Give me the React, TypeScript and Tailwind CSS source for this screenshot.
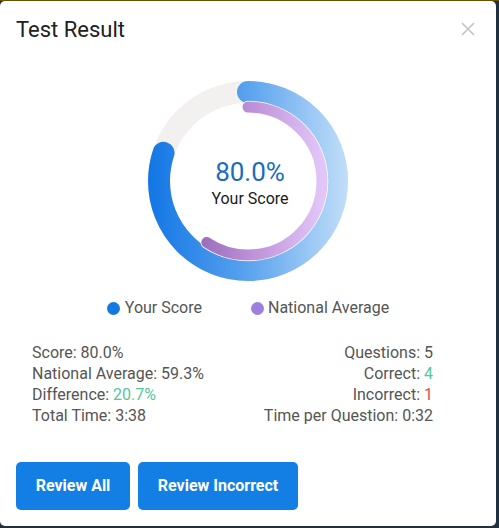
import React from "react";

const stats = {
  score: 80.0,
  national: 59.3,
};

function Donut() {
  const r1 = 89;
  const c1 = 2 * Math.PI * r1;
  const r2 = 74;
  const c2 = 2 * Math.PI * r2;
  return (
    <div className="relative w-[200px] h-[200px] mx-auto">
      <svg width="200" height="200" viewBox="0 0 200 200">
        <defs>
          <linearGradient id="blueG" gradientUnits="userSpaceOnUse" x1="0" y1="0" x2="0" y2="200">
            <stop offset="0" stopColor="#1176e4" />
            <stop offset="0.5" stopColor="#5aa3ee" />
            <stop offset="1" stopColor="#c2def8" />
          </linearGradient>
          <linearGradient id="purpG" gradientUnits="userSpaceOnUse" x1="0" y1="26" x2="0" y2="174">
            <stop offset="0" stopColor="#8a58ad" />
            <stop offset="0.5" stopColor="#bb8fd6" />
            <stop offset="1" stopColor="#e2c6f8" />
          </linearGradient>
        </defs>
        <circle cx="100" cy="100" r={r1} fill="none" stroke="#f3f0f0" strokeWidth="22" />
        <circle
          cx="100"
          cy="100"
          r={r1}
          fill="none"
          stroke="url(#blueG)"
          strokeWidth="22"
          strokeLinecap="round"
          strokeDasharray={`${(stats.score / 100) * c1} ${c1}`}
          transform="rotate(-90 100 100)"
        />
        <circle
          cx="100"
          cy="100"
          r={r2}
          fill="none"
          stroke="#ffffff"
          strokeWidth="12.5"
          strokeLinecap="round"
          strokeDasharray={`${(stats.national / 100) * c2} ${c2}`}
          transform="rotate(-90 100 100)"
        />
        <circle
          cx="100"
          cy="100"
          r={r2}
          fill="none"
          stroke="url(#purpG)"
          strokeWidth="11"
          strokeLinecap="round"
          strokeDasharray={`${(stats.national / 100) * c2} ${c2}`}
          transform="rotate(-90 100 100)"
        />
      </svg>
      <div className="absolute inset-0 flex flex-col items-center justify-center pt-[3px] pl-[4px]">
        <div className="text-[26px] leading-[30px] text-[#1a6cc0]">80.0%</div>
        <div className="text-[16px] leading-[20px] text-[#1a1a1a] mt-[2px]">Your Score</div>
      </div>
    </div>
  );
}

export default function App() {
  return (
    <div
      className="w-[499px] h-[528px] bg-[#22303d] border-t border-[#6b5200] overflow-hidden"
      style={{ fontFamily: "Roboto, 'Liberation Sans', sans-serif" }}
    >
      <div className="w-[496px] h-[525px] bg-white rounded-[5px] flex flex-col">
        <div className="flex items-center justify-between pl-[16px] pr-[21px] pt-[14px] h-[56px]">
          <div className="text-[22px] leading-[28px] font-normal text-[#212121] -mt-[12px]">Test Result</div>
          <svg width="14" height="14" viewBox="0 0 14 14" className="-mt-[14px]">
            <path d="M1 1 L13 13 M13 1 L1 13" stroke="#c4c4c4" strokeWidth="1.6" />
          </svg>
        </div>
        <div className="mt-[24px]">
          <Donut />
        </div>
        <div className="flex items-center justify-center gap-[49px] mt-[17px] text-[16px] leading-[20px] text-[#555]">
          <div className="flex items-center gap-[5px]">
            <span className="w-[13px] h-[13px] rounded-full bg-[#1478e3]" />
            <span>Your Score</span>
          </div>
          <div className="flex items-center gap-[4px]">
            <span className="w-[13px] h-[13px] rounded-full bg-[#9b80df]" />
            <span>National Average</span>
          </div>
        </div>
        <div className="flex justify-between pl-[32px] pr-[63px] mt-[24px] text-[16px] leading-[21px] text-[#555]">
          <div className="flex flex-col">
            <div>Score: 80.0%</div>
            <div>National Average: 59.3%</div>
            <div>
              Difference: <span className="text-[#52c79a]">20.7%</span>
            </div>
            <div>Total Time: 3:38</div>
          </div>
          <div className="flex flex-col items-end">
            <div>Questions: 5</div>
            <div>
              Correct: <span className="text-[#52c79a]">4</span>
            </div>
            <div>
              Incorrect: <span className="text-[#e24c4b]">1</span>
            </div>
            <div>Time per Question: 0:32</div>
          </div>
        </div>
        <div className="flex gap-[8px] pl-[16px] mt-[36px]">
          <button className="h-[48px] w-[114px] rounded-[5px] bg-[#137fe5] text-white text-[16px] font-bold">
            Review All
          </button>
          <button className="h-[48px] w-[160px] rounded-[5px] bg-[#137fe5] text-white text-[16px] font-bold">
            Review Incorrect
          </button>
        </div>
      </div>
    </div>
  );
}
